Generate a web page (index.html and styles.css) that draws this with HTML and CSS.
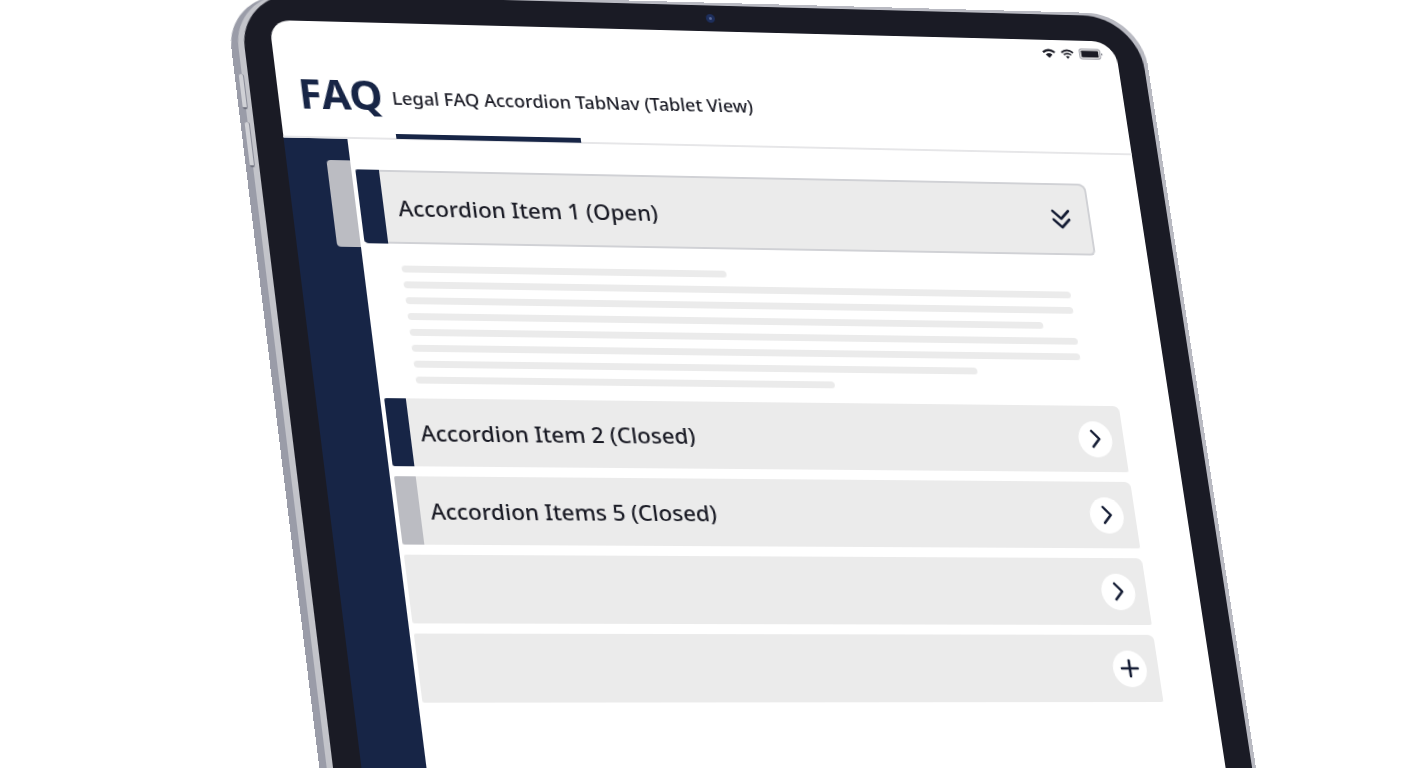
FILE: index.html
```html
<!DOCTYPE html>
<html lang="en">
<head>
<meta charset="utf-8">
<meta name="viewport" content="width=device-width, initial-scale=1">
<title>Legal FAQ</title>
<link rel="stylesheet" href="styles.css">
</head>
<body>
<div class="tablet">
  <span class="camera"></span>
  <span class="side-button side-button-up"></span>
  <span class="side-button side-button-down"></span>
  <div class="screen">
    <div class="status">
      <svg width="14" height="11" viewBox="0 0 14 11" fill="none" stroke="#1a1b25"><path d="M1 4.2Q7-.8 13 4.2" stroke-width="2.4"/><path d="M3.6 6.4Q7 3.8 10.4 6.4L7 10Z" fill="#1a1b25" stroke="none"/></svg>
      <svg width="14" height="11" viewBox="0 0 14 11" fill="none" stroke="#1a1b25"><path d="M1 4Q7-1 13 4" stroke-width="1.8"/><path d="M3.2 6.4Q7 3.2 10.8 6.4" stroke-width="1.6"/><path d="M5 8.2Q7 6.6 9 8.2L7 10.4Z" fill="#1a1b25" stroke="none"/></svg>
      <svg width="25" height="12" viewBox="0 0 25 12"><rect x=".8" y=".8" width="21" height="10.4" rx="2.4" fill="#fff" stroke="#a2a3ab" stroke-width="1.3"/><rect x="2.4" y="2.4" width="17.8" height="7.2" rx=".8" fill="#1a1b25"/><path d="M23 4.8l1.8 1.2-1.8 1.2z" fill="#74757f"/></svg>
    </div>
    <header class="header">
      <h1 class="logo">FAQ</h1>
      <p class="subtitle">Legal FAQ Accordion TabNav (Tablet View)</p>
      <span class="tab-line"></span>
    </header>
    <div class="body">
      <aside class="rail"><span class="rail-mark"></span></aside>
      <main class="list">
        <section class="open-item">
          <button class="row row-open" type="button" aria-expanded="true" aria-controls="panel">
            <span class="tab tab-navy"></span>
            <span class="label">Accordion Item 1 (Open)</span>
            <svg class="double" width="20" height="22" viewBox="0 0 20 22"><path d="M2 2l8 8 8-8M2 11l8 8 8-8"/></svg>
          </button>
          <div class="panel" id="panel">
            <span class="line" style="width:48%"></span>
            <span class="line" style="width:100%"></span>
            <span class="line" style="width:100%"></span>
            <span class="line" style="width:95%"></span>
            <span class="line" style="width:100%"></span>
            <span class="line" style="width:100%"></span>
            <span class="line" style="width:84%"></span>
            <span class="line" style="width:62%"></span>
          </div>
        </section>
        <button class="row" type="button" aria-expanded="false">
          <span class="tab tab-navy"></span>
          <span class="label">Accordion Item 2 (Closed)</span>
          <span class="disc"><svg width="20" height="20" viewBox="0 0 20 20"><path d="M7 2l7 8-7 8"/></svg></span>
        </button>
        <button class="row" type="button" aria-expanded="false">
          <span class="tab tab-grey"></span>
          <span class="label">Accordion Items 5 (Closed)</span>
          <span class="disc"><svg width="20" height="20" viewBox="0 0 20 20"><path d="M7 2l7 8-7 8"/></svg></span>
        </button>
        <button class="row" type="button" aria-expanded="false" aria-label="Expand item">
          <span class="label"></span>
          <span class="disc"><svg width="20" height="20" viewBox="0 0 20 20"><path d="M7 2l7 8-7 8"/></svg></span>
        </button>
        <button class="row" type="button" aria-expanded="false" aria-label="Add item">
          <span class="label"></span>
          <span class="disc"><svg width="20" height="20" viewBox="0 0 20 20"><path d="M10 2v16M2 10h16"/></svg></span>
        </button>
      </main>
    </div>
  </div>
</div>
</body>
</html>
```
FILE: styles.css
```css
:root {
  --navy: #172546;
  --ink: #1a1b25;
  --row: #ebebeb;
  --grey: #bbbcc2;
}

* { box-sizing: border-box; }

html, body { height: 100%; }

body {
  margin: 0;
  overflow: hidden;
  display: flow-root;
  background: #fff;
  color: var(--ink);
  font-family: "Noto Sans", "Open Sans", sans-serif;
}

/* The device lies on a tilted plane, seen in perspective */
.tablet {
  position: relative;
  width: 64.2%;
  margin: -7px 0 0 17.2%;
  padding: 27px;
  border-radius: 56px;
  background: var(--ink);
  box-shadow: 4px -3px 0 #b9bac2, -6px 0 0 #c3c4ca, -13px 2px 0 #9a9ca8;
  transform-origin: 27px 27px;
  transform: matrix3d(1.02844, .0263, 0, .0000399, .12052, .97497, 0, -.000034, 0, 0, 1, 0, 0, 0, 0, 1);
}

.camera {
  position: absolute;
  top: 9px;
  left: 51%;
  width: 9px;
  height: 9px;
  border: 3px solid #1d2e5c;
  border-radius: 50%;
  background: #5a6a98;
}

.side-button {
  position: absolute;
  left: -9px;
  width: 5px;
  border-radius: 3px;
  background: #d0d1d6;
  border-right: 1px solid #8b8d99;
  border-bottom: 2px solid #6c6e7b;
}

.side-button-up { top: 83px; height: 36px; }
.side-button-down { top: 132px; height: 46px; }

.screen {
  display: flex;
  flex-direction: column;
  min-height: 108vh;
  border-radius: 20px 24px 20px 20px;
  overflow: hidden;
  background: #fff;
}

.status {
  display: flex;
  justify-content: flex-end;
  align-items: center;
  gap: 5px;
  height: 28px;
  padding-right: 14px;
}

.header {
  position: relative;
  display: flex;
  align-items: center;
  gap: 9px;
  height: 92px;
  padding: 2px 24px 0 20px;
  border-bottom: 2px solid #e6e6e8;
}

.header > * { margin: 0; }

.logo {
  color: var(--navy);
  font-size: 41px;
  line-height: 48px;
  font-weight: 700;
}

.subtitle {
  padding-top: 6px;
  font-size: 18px;
  line-height: 24px;
  font-weight: 500;
}

.tab-line {
  position: absolute;
  left: 110px;
  bottom: -1px;
  width: 182px;
  height: 5px;
  background: var(--navy);
}

.body { flex: 1; display: flex; }

.rail {
  width: 62px;
  padding-top: 22px;
  background: var(--navy);
}

.rail-mark {
  display: block;
  width: 23px;
  height: 88px;
  margin-left: auto;
  border-radius: 4px 0 0 4px;
  background: var(--grey);
}

.list {
  flex: 1;
  display: flex;
  flex-direction: column;
  gap: 10px;
  padding: 31px 53px 0 4px;
}

.row {
  display: flex;
  align-items: center;
  width: 100%;
  height: 68px;
  padding: 0 12px 0 0;
  border: 0;
  border-radius: 2px 6px 2px 2px;
  overflow: hidden;
  background: var(--row);
  color: inherit;
  font: inherit;
  text-align: left;
}

.row-open {
  height: 75px;
  padding-right: 20px;
  border-radius: 2px 8px 6px 4px;
  box-shadow: inset 0 0 0 2px #d0d1d5;
}

.tab { align-self: stretch; width: 21px; }
.tab-navy { background: var(--navy); }
.tab-grey { background: var(--grey); }

.label {
  flex: 1;
  padding-left: 10px;
  font-size: 22px;
  line-height: 32px;
  font-weight: 500;
}

.row-open .tab { width: 23px; }
.row-open .label { padding-left: 14px; }

.row svg {
  fill: none;
  stroke: #141c34;
  stroke-width: 2.6;
  stroke-linecap: round;
  stroke-linejoin: round;
}

.disc {
  display: flex;
  align-items: center;
  justify-content: center;
  width: 34px;
  height: 37px;
  border-radius: 50%;
  background: #fff;
}

.panel {
  display: flex;
  flex-direction: column;
  gap: 9px;
  padding: 22px 32px 5px 33px;
}

.line {
  height: 7px;
  border-radius: 4px;
  background: var(--row);
}
```
